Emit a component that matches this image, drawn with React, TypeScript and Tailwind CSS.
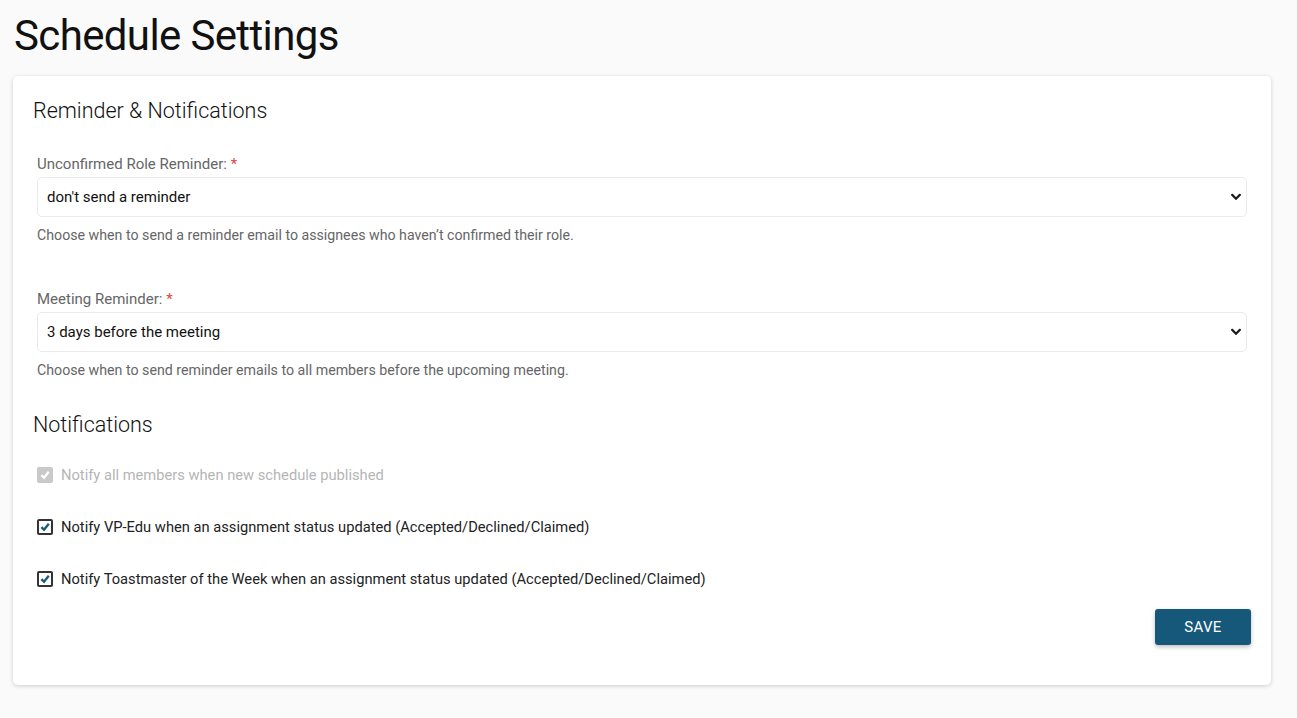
import { useState } from 'react'

const UNCONFIRMED = ["don't send a reminder", '1 day after assignment', '2 days after assignment', '3 days after assignment']
const MEETING = ["don't send a reminder", '1 day before the meeting', '2 days before the meeting', '3 days before the meeting', '1 week before the meeting']

function Chevron() {
  return (
    <svg width="10" height="7" viewBox="0 0 10 7" className="pointer-events-none absolute right-[6px] top-1/2 -translate-y-1/2">
      <path d="M1.2 1.4 L5 5.2 L8.8 1.4" fill="none" stroke="#1b1b1b" strokeWidth="2.2" strokeLinecap="square" />
    </svg>
  )
}

function SelectField({ label, options, value, onChange, help }: {
  label: string; options: string[]; value: string; onChange: (v: string) => void; help: string
}) {
  return (
    <div>
      <label className="block text-[15px] leading-5 text-[#666]">
        {label} <span className="text-[#e0443c]">*</span>
      </label>
      <div className="relative mt-[3px]">
        <select value={value} onChange={e => onChange(e.target.value)}
          className="block h-[40px] w-full appearance-none rounded-[5px] border border-[#ebebeb] bg-white pl-[9px] text-[15px] text-[#111] outline-none">
          {options.map(o => <option key={o} value={o}>{o}</option>)}
        </select>
        <Chevron />
      </div>
      <p className="mt-2 text-[14.2px] leading-5 text-[#666]">{help}</p>
    </div>
  )
}

function Check({ checked, disabled, onToggle, label }: {
  checked: boolean; disabled?: boolean; onToggle?: () => void; label: string
}) {
  return (
    <label className={`flex h-5 items-center gap-2 text-[14.7px] ${disabled ? 'text-[#b5b5b5]' : 'cursor-pointer text-[#222]'}`}>
      <span onClick={disabled ? undefined : onToggle}
        className={`flex h-4 w-4 items-center justify-center rounded-[2px] ${disabled ? 'bg-[#c9c9c9]' : 'border-2 border-[#333] bg-white'}`}>
        {checked && (
          <svg width="10" height="10" viewBox="0 0 10 10">
            <path d="M1.4 5.2 L4 7.8 L8.8 1.8" fill="none" stroke={disabled ? '#fff' : '#1d5b7b'} strokeWidth="2.4" />
          </svg>
        )}
      </span>
      {label}
    </label>
  )
}

export default function App() {
  const [unconfirmed, setUnconfirmed] = useState(UNCONFIRMED[0])
  const [meeting, setMeeting] = useState(MEETING[3])
  const [vpEdu, setVpEdu] = useState(true)
  const [tmow, setTmow] = useState(true)

  return (
    <div className="min-h-[718px] bg-[#fafafa] px-[13px] pb-8" style={{ fontFamily: 'Roboto, "Noto Sans", sans-serif' }}>
      <h1 className="pt-[9px] pb-[13px] pl-[1px] text-[42px] leading-[54px] tracking-[-0.015em] text-[#111]">Schedule Settings</h1>

      <div className="w-[1258px] rounded-[5px] bg-white px-5 pt-[21px] pb-10 shadow-[0_1px_4px_rgba(0,0,0,0.18)]">
        <h2 className="text-[21.5px] font-light leading-7 text-[#111]">Reminder &amp; Notifications</h2>

        <div className="px-1 pt-[29px]">
          <SelectField label="Unconfirmed Role Reminder:" options={UNCONFIRMED} value={unconfirmed} onChange={setUnconfirmed}
            help="Choose when to send a reminder email to assignees who haven’t confirmed their role." />
          <div className="h-[44px]" />
          <SelectField label="Meeting Reminder:" options={MEETING} value={meeting} onChange={setMeeting}
            help="Choose when to send reminder emails to all members before the upcoming meeting." />
        </div>

        <h2 className="mt-[31px] text-[21.5px] font-light leading-7 text-[#111]">Notifications</h2>

        <div className="flex flex-col gap-8 px-1 pt-[26px]">
          <Check checked disabled label="Notify all members when new schedule published" />
          <Check checked={vpEdu} onToggle={() => setVpEdu(v => !v)} label="Notify VP-Edu when an assignment status updated (Accepted/Declined/Claimed)" />
          <Check checked={tmow} onToggle={() => setTmow(v => !v)} label="Notify Toastmaster of the Week when an assignment status updated (Accepted/Declined/Claimed)" />
        </div>

        <div className="mt-5 flex justify-end">
          <button className="h-9 w-24 rounded-[3px] bg-[#16587a] text-[15px] font-normal tracking-[0.02em] text-white shadow-[0_2px_4px_rgba(0,0,0,0.25)]">SAVE</button>
        </div>
      </div>
    </div>
  )
}
